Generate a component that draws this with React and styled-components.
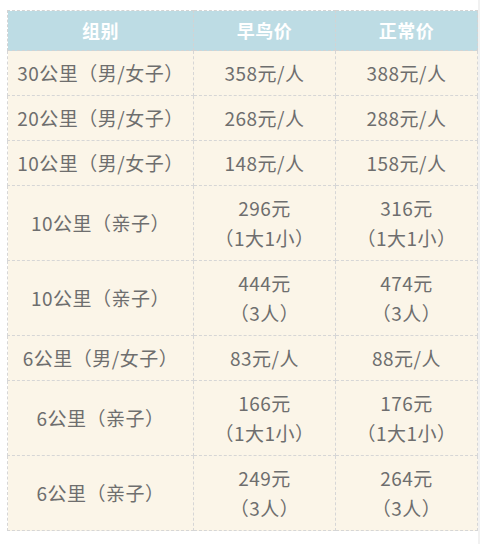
import React from "react";
import styled, { createGlobalStyle } from "styled-components";

const Global = createGlobalStyle`
  html, body { margin: 0; padding: 0; background: #ffffff; }
  body { font-family: "Noto Sans CJK SC", "Noto Sans", sans-serif; }
`;

const Page = styled.div`
  box-sizing: border-box;
  width: 480px;
  min-height: 544px;
  padding: 10px 0 0 7px;
  border-right: 2px solid #f1f1f1;
`;

const Table = styled.table`
  border-collapse: collapse;
  table-layout: fixed;
  width: 470px;
  font-size: 19px;
  letter-spacing: 0.5px;
  color: #6e6e6e;
`;

const HeadCell = styled.th`
  background: #bddce4;
  color: #ffffff;
  font-weight: 700;
  font-size: 18px;
  line-height: 29px;
  padding: 5px 0;
  border: 1px dashed #d3d3d3;
  text-align: center;
`;

const Cell = styled.td`
  background: #fbf5e8;
  line-height: 30px;
  padding: 7px 0;
  border: 1px dashed #d6d6d6;
  text-align: center;
  vertical-align: middle;
`;

const Line = styled.div``;

const rows = [
  ["30公里（男/女子）", ["358元/人"], ["388元/人"]],
  ["20公里（男/女子）", ["268元/人"], ["288元/人"]],
  ["10公里（男/女子）", ["148元/人"], ["158元/人"]],
  ["10公里（亲子）", ["296元", "（1大1小）"], ["316元", "（1大1小）"]],
  ["10公里（亲子）", ["444元", "（3人）"], ["474元", "（3人）"]],
  ["6公里（男/女子）", ["83元/人"], ["88元/人"]],
  ["6公里（亲子）", ["166元", "（1大1小）"], ["176元", "（1大1小）"]],
  ["6公里（亲子）", ["249元", "（3人）"], ["264元", "（3人）"]],
];

const Price = ({ lines }) => (
  <Cell>
    {lines.map((l, i) => (
      <Line key={i}>{l}</Line>
    ))}
  </Cell>
);

export default function App() {
  return (
    <Page>
      <Global />
      <Table>
        <colgroup>
          <col style={{ width: 186 }} />
          <col style={{ width: 142 }} />
          <col style={{ width: 142 }} />
        </colgroup>
        <thead>
          <tr>
            <HeadCell>组别</HeadCell>
            <HeadCell>早鸟价</HeadCell>
            <HeadCell>正常价</HeadCell>
          </tr>
        </thead>
        <tbody>
          {rows.map((r, i) => (
            <tr key={i}>
              <Cell>{r[0]}</Cell>
              <Price lines={r[1]} />
              <Price lines={r[2]} />
            </tr>
          ))}
        </tbody>
      </Table>
    </Page>
  );
}
